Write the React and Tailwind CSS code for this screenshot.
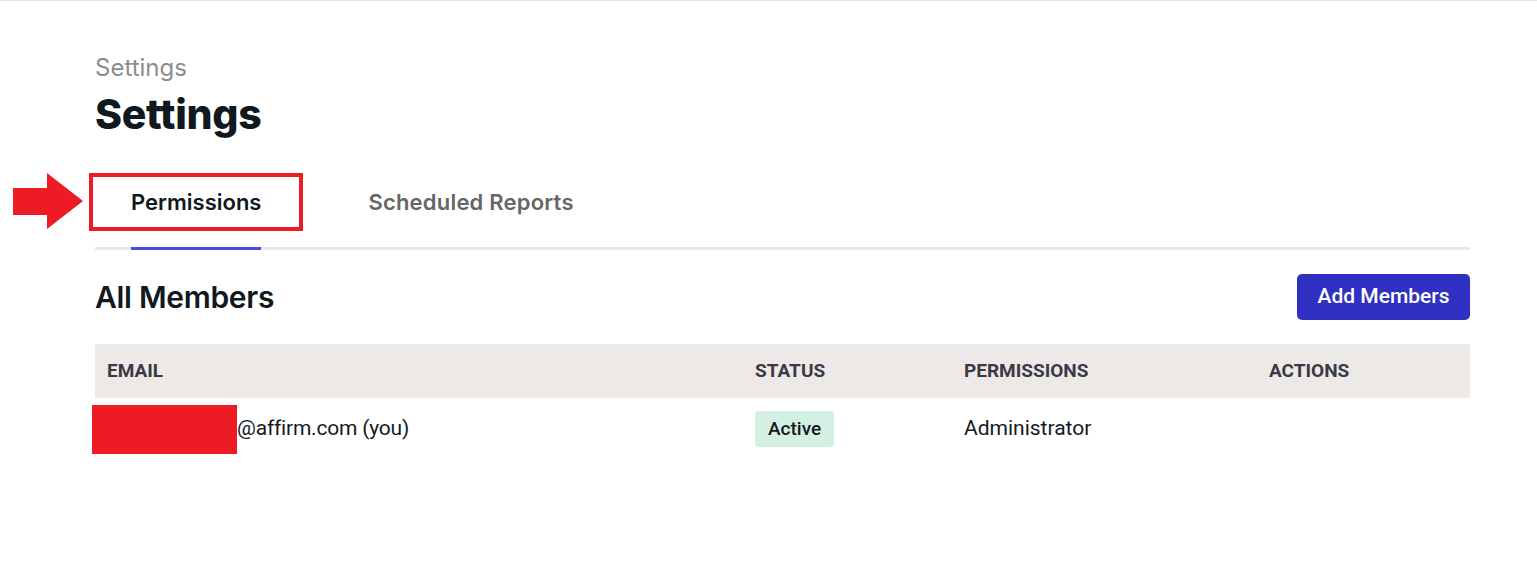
import React from "react";

export default function App() {
  return (
    <div className="min-h-[574px] w-full bg-white border-t border-[#e2e2e2]" style={{ fontFamily: "Roboto, 'Liberation Sans', sans-serif" }}>
      <div className="pl-[95px] pr-[67px] pt-[53px]">
        <div className="text-[24px] leading-[28px] text-[#8c8c8c]" style={{ fontFamily: "Inter, sans-serif" }}>Settings</div>
        <h1 className="mt-[8px] text-[41px] leading-[48px] font-extrabold text-[#101820] tracking-[-0.3px]" style={{ fontFamily: "Inter, sans-serif" }}>Settings</h1>

        <div className="relative mt-[35px] flex border-b-[3px] border-[#e8e8e8]" style={{ fontFamily: "Inter, sans-serif" }}>
          <svg className="absolute left-[-82px] top-0" width="71" height="57" viewBox="0 0 71 57">
            <polygon points="0,15 34,15 34,0 70,28 34,56 34,42 0,42" fill="#ed1c24" />
          </svg>
          <div className="relative px-[36px] pt-[15px]">
            <div className="absolute left-[-6px] top-0 w-[214px] h-[58px] border-[4px] border-[#ed1c24]" />
            <div className="pb-[31px] -mb-[3px] border-b-[3px] border-[#4b4be6] text-[22px] leading-[28px] font-semibold text-[#101820]">Permissions</div>
          </div>
          <div className="ml-[35px] px-[36px] pt-[15px]">
            <div className="pb-[31px] text-[22px] leading-[28px] font-semibold text-[#666666] tracking-[0.2px]">Scheduled Reports</div>
          </div>
        </div>

        <div className="mt-[24px] flex items-center justify-between">
          <h2 className="text-[30px] leading-[36px] font-semibold text-[#101820] tracking-[-0.3px]" style={{ fontFamily: "Inter, sans-serif" }}>All Members</h2>
          <button className="h-[46px] w-[173px] rounded-[5px] bg-[#3030c2] text-[21px] font-medium text-white">Add Members</button>
        </div>

        <div className="mt-[24px]">
          <div className="grid grid-cols-[648px_209px_305px_1fr] h-[54px] items-center bg-[#ede9e6] text-[19px] font-bold text-[#3a3a46] uppercase">
            <div className="pl-[12px]">Email</div>
            <div className="pl-[12px]">Status</div>
            <div className="pl-[12px]">Permissions</div>
            <div className="pl-[12px]">Actions</div>
          </div>
          <div className="grid grid-cols-[648px_209px_305px_1fr] h-[62px] items-center text-[21px] text-[#141a22]">
            <div className="pl-[12px] flex items-center">
              <span className="-ml-[15px] inline-block h-[49px] w-[145px] bg-[#ed1c24]" />
              <span className="tracking-[-0.2px]">@affirm.com (you)</span>
            </div>
            <div className="pl-[12px]">
              <span className="inline-flex h-[36px] items-center rounded-[4px] bg-[#d3f0e3] px-[13px] text-[19px] font-medium text-[#141a22]">Active</span>
            </div>
            <div className="pl-[12px]">Administrator</div>
            <div className="pl-[12px]" />
          </div>
        </div>
      </div>
    </div>
  );
}
